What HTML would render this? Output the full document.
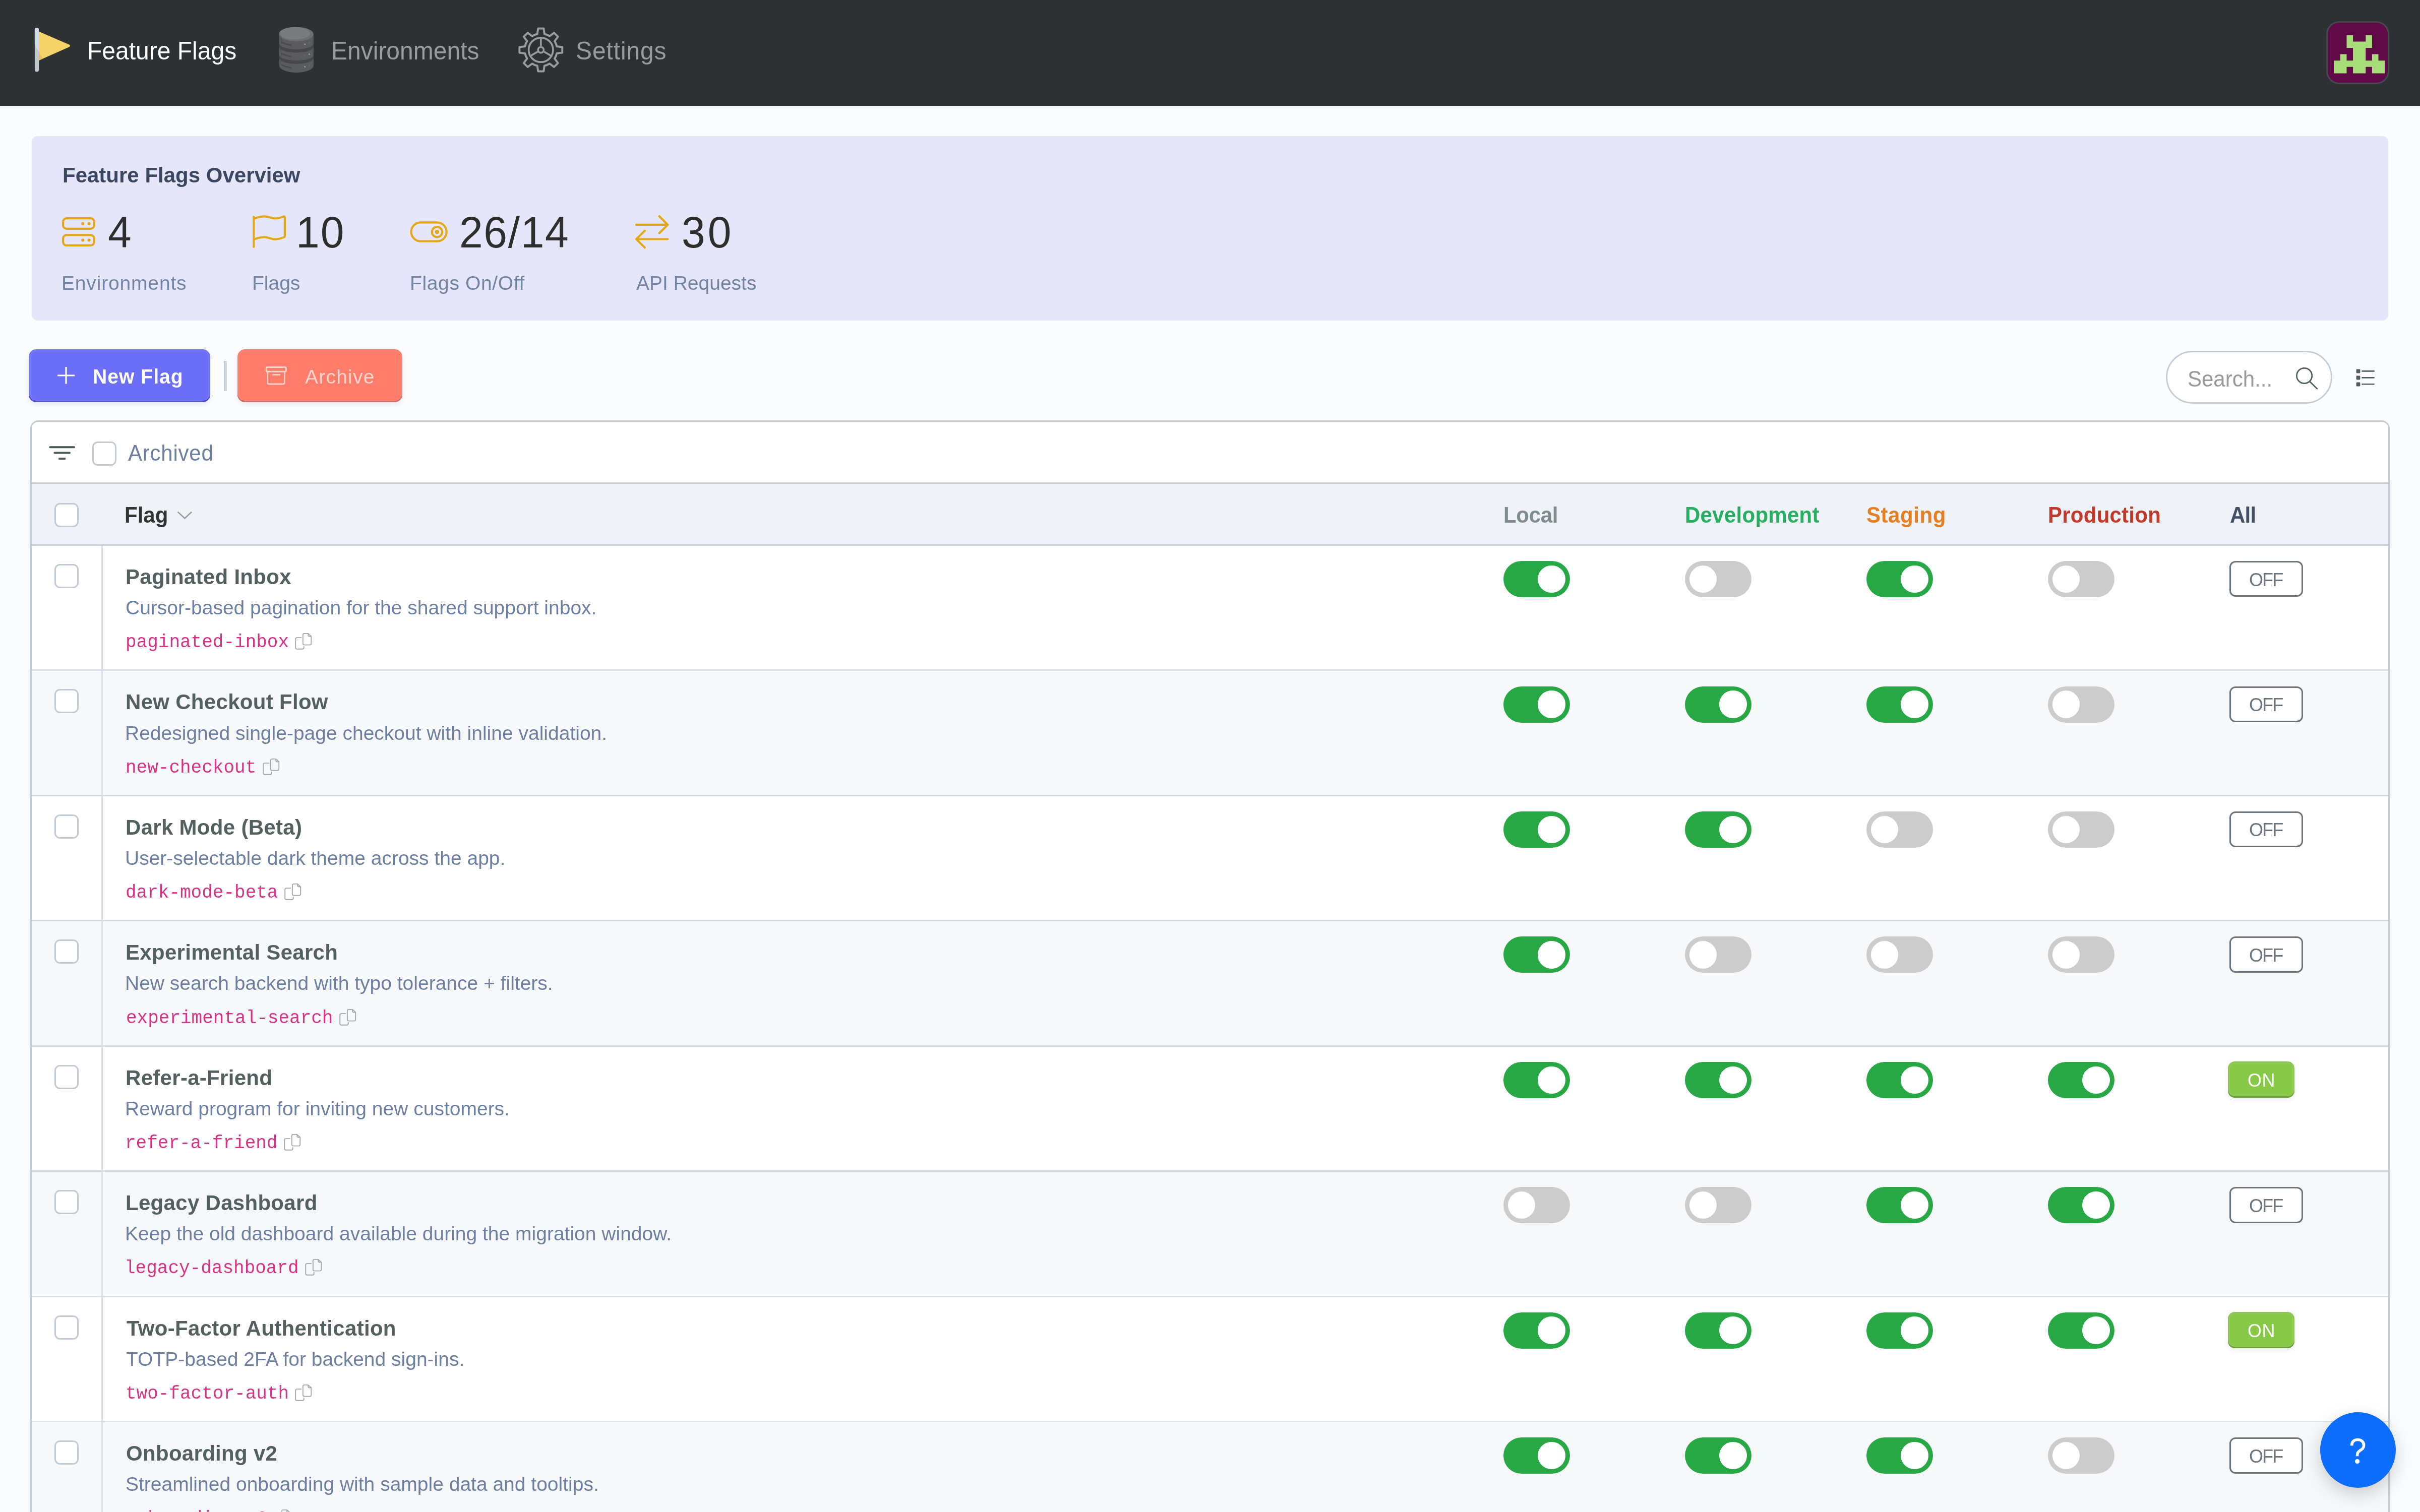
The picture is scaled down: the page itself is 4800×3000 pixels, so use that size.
<!DOCTYPE html>
<html><head><meta charset="utf-8"><title>Feature Flags</title>
<style>
html,body{margin:0;padding:0}
body{width:4800px;height:3000px;overflow:hidden;position:relative;background:#fbfcfd;font-family:'Liberation Sans',sans-serif}
@media (max-width:1800px){html{zoom:0.3333333}}
@media (min-width:1801px) and (max-width:2700px){html{zoom:0.5}}
@media (min-width:2701px) and (max-width:3600px){html{zoom:0.6666667}}
.t{position:absolute;white-space:nowrap;will-change:transform}
.r{position:absolute;box-sizing:border-box}
.s{position:absolute;overflow:visible}
</style></head><body>
<div class="r" style="left:0.00px;top:0.00px;width:4800.00px;height:210.00px;background:#2d3134"></div>
<svg class="s" style="left:60.00px;top:50.00px;" width="90.00" height="100.00" viewBox="60.00 50.00 90.00 100.00"><rect x="68.9" y="55.1" width="8.1" height="87.4" rx="4.05" fill="#c0c7cd"/><path d="M68.9,59.1 Q68.9,55.1 72.95,55.1 Q77,55.1 77,59.1 V102 Q71.5,95 68.9,87.1 Z" fill="#cfdbe5"/><path d="M77,62.5 L136.5,88.2 Q141.5,90.8 136.5,93.4 L77,119.9 Z" fill="#f5d368"/><path d="M77,102 Q80.5,110.5 85.3,116.3 L77,119.9 Z" fill="#e5c060"/></svg>
<div class="t" style="left:173.06px;top:78.47px;font-size:48px;line-height:48px;color:#ffffff;font-family:'Liberation Sans',sans-serif;transform:scaleY(1.054);transform-origin:0 40.63px;">Feature Flags</div>
<svg class="s" style="left:550.00px;top:50.00px;" width="76.00" height="98.00" viewBox="550.00 50.00 76.00 98.00"><path d="M553.9,67.9 V129.8 A34,14.2 0 0 0 621.9,129.8 V67.9 Z" fill="#5a5b5d"/><path d="M553.9,86 A34,11.8 0 0 0 621.9,86 V92.9 A34,11.5 0 0 1 553.9,92.9 Z" fill="#464749"/><path d="M553.9,108.9 A34,11.1 0 0 0 621.9,108.9 V115.1 A34,11.5 0 0 1 553.9,115.1 Z" fill="#464749"/><ellipse cx="587.9" cy="67.9" rx="34" ry="14.2" fill="#6c6d6f"/><ellipse cx="584.5" cy="66.2" rx="30.5" ry="12.4" fill="#7a7b7d"/><g stroke="#4a4b4d" stroke-width="2.8" stroke-linecap="round" fill="none"><path d="M559.2,83.9 Q566,87.5 577.3,89.8"/><path d="M559.2,106.5 Q566,110 577.3,112.1"/><path d="M559.2,129.1 Q566,132.6 577.3,134.7"/></g><g fill="#9a9b9d"><circle cx="604.7" cy="87.7" r="1.5"/><circle cx="613.4" cy="107.5" r="1.5"/><circle cx="604.7" cy="132.5" r="1.5"/></g><g fill="#68696b"><circle cx="613.4" cy="84.9" r="1.5"/><circle cx="604.7" cy="109.9" r="1.5"/><circle cx="613.4" cy="129.7" r="1.5"/></g></svg>
<div class="t" style="left:657.16px;top:78.47px;font-size:48px;line-height:48px;color:#9a9b9d;font-family:'Liberation Sans',sans-serif;transform:scaleY(1.054);transform-origin:0 40.63px;">Environments</div>
<svg class="s" style="left:1020.00px;top:48.00px;" width="106.00" height="104.00" viewBox="1020.00 48.00 106.00 104.00"><g fill="none" stroke="#9a9b9d" stroke-linejoin="round"><path d="M1065.75,67.48 L1067.29,56.56 L1078.31,56.56 L1079.85,67.48 A32.3,32.3 0 0 1 1090.11,71.73 L1098.91,65.09 L1106.71,72.89 L1100.07,81.69 A32.3,32.3 0 0 1 1104.32,91.95 L1115.24,93.49 L1115.24,104.51 L1104.32,106.05 A32.3,32.3 0 0 1 1100.07,116.31 L1106.71,125.11 L1098.91,132.91 L1090.11,126.27 A32.3,32.3 0 0 1 1079.85,130.52 L1078.31,141.44 L1067.29,141.44 L1065.75,130.52 A32.3,32.3 0 0 1 1055.49,126.27 L1046.69,132.91 L1038.89,125.11 L1045.53,116.31 A32.3,32.3 0 0 1 1041.28,106.05 L1030.36,104.51 L1030.36,93.49 L1041.28,91.95 A32.3,32.3 0 0 1 1045.53,81.69 L1038.89,72.89 L1046.69,65.09 L1055.49,71.73 A32.3,32.3 0 0 1 1065.75,67.48 Z" stroke-width="4"/><circle cx="1072.8" cy="99.0" r="24.2" stroke-width="3.7"/><circle cx="1072.8" cy="99.0" r="5.6" stroke-width="3.7"/><g stroke-width="3.7"><line x1="1072.80" y1="91.60" x2="1072.80" y2="76.50"/><line x1="1079.21" y1="102.70" x2="1092.29" y2="110.25"/><line x1="1066.39" y1="102.70" x2="1053.31" y2="110.25"/></g></g></svg>
<div class="t" style="left:1141.62px;top:78.47px;font-size:48px;line-height:48px;color:#9a9b9d;font-family:'Liberation Sans',sans-serif;letter-spacing:0.88px;transform:scaleY(1.054);transform-origin:0 40.63px;">Settings</div>
<div class="r" style="left:4614.00px;top:42.00px;width:125.00px;height:125.00px;border:3px solid #45494e;border-radius:26px;background:#600a47"></div>
<svg class="s" style="left:4614.00px;top:42.00px;" width="125.00" height="125.00" viewBox="4614.00 42.00 125.00 125.00"><path fill="#a6dd78" d="M4654.50,69.80 h12.60 v12.60 h-12.60 Z M4692.30,69.80 h12.60 v12.60 h-12.60 Z M4654.50,82.40 h12.60 v12.60 h-12.60 Z M4667.10,82.40 h12.60 v12.60 h-12.60 Z M4679.70,82.40 h12.60 v12.60 h-12.60 Z M4692.30,82.40 h12.60 v12.60 h-12.60 Z M4667.10,95.00 h12.60 v12.60 h-12.60 Z M4679.70,95.00 h12.60 v12.60 h-12.60 Z M4641.90,107.60 h12.60 v12.60 h-12.60 Z M4667.10,107.60 h12.60 v12.60 h-12.60 Z M4679.70,107.60 h12.60 v12.60 h-12.60 Z M4704.90,107.60 h12.60 v12.60 h-12.60 Z M4629.30,120.20 h12.60 v12.60 h-12.60 Z M4641.90,120.20 h12.60 v12.60 h-12.60 Z M4654.50,120.20 h12.60 v12.60 h-12.60 Z M4667.10,120.20 h12.60 v12.60 h-12.60 Z M4679.70,120.20 h12.60 v12.60 h-12.60 Z M4692.30,120.20 h12.60 v12.60 h-12.60 Z M4704.90,120.20 h12.60 v12.60 h-12.60 Z M4717.50,120.20 h12.60 v12.60 h-12.60 Z M4629.30,132.80 h12.60 v12.60 h-12.60 Z M4641.90,132.80 h12.60 v12.60 h-12.60 Z M4667.10,132.80 h12.60 v12.60 h-12.60 Z M4679.70,132.80 h12.60 v12.60 h-12.60 Z M4704.90,132.80 h12.60 v12.60 h-12.60 Z M4717.50,132.80 h12.60 v12.60 h-12.60 Z "/></svg>
<div class="r" style="left:63.00px;top:270.00px;width:4674.00px;height:366.00px;background:#e6e6fa;border-radius:12px"></div>
<div class="t" style="left:123.79px;top:327.25px;font-size:42px;line-height:42px;color:#3a4762;font-family:'Liberation Sans',sans-serif;font-weight:700;transform:scaleY(1.020);transform-origin:0 35.55px;">Feature Flags Overview</div>
<svg class="s" style="left:118.00px;top:425.00px;" width="76.00" height="70.00" viewBox="118.00 425.00 76.00 70.00"><g fill="none" stroke="#e4a817" stroke-width="4.2"><rect x="125.06" y="433.2" width="61.64" height="20.7" rx="7"/><rect x="125.06" y="466.3" width="61.64" height="20.65" rx="7"/></g><g fill="#e4a817"><circle cx="164.2" cy="443.8" r="3"/><circle cx="176.6" cy="443.8" r="3"/><circle cx="164.2" cy="476.6" r="3"/><circle cx="176.6" cy="476.6" r="3"/></g></svg>
<div class="t" style="left:214.37px;top:420.29px;font-size:84px;line-height:84px;color:#2e2e2e;font-family:'Liberation Sans',sans-serif;transform:scaleY(1.040);transform-origin:0 71.11px;">4</div>
<div class="t" style="left:122.00px;top:542.19px;font-size:39px;line-height:39px;color:#7284a3;font-family:'Liberation Sans',sans-serif;letter-spacing:0.83px;">Environments</div>
<svg class="s" style="left:495.00px;top:420.00px;" width="80.00" height="80.00" viewBox="495.00 420.00 80.00 80.00"><g fill="none" stroke="#e4a817" stroke-width="4.2" stroke-linecap="round" stroke-linejoin="round"><path d="M503.2,430 V490"/><path d="M503.2,434.2 C511,431 517,429.3 524.4,429.3 C533,429.3 538.5,433.5 546.1,433.5 C553.5,433.5 558.5,431 562,429.6 Q564.9,428.8 564.9,431.5 V468 Q564.9,470 562.5,470.9 C558,472.8 553,474.8 546,474.8 C537,474.8 531.5,470.3 524.4,470.3 C516,470.3 509,472.8 503.2,475.2"/></g></svg>
<div class="t" style="left:587.40px;top:420.29px;font-size:84px;line-height:84px;color:#2e2e2e;font-family:'Liberation Sans',sans-serif;letter-spacing:2px;transform:scaleY(1.040);transform-origin:0 71.11px;">10</div>
<div class="t" style="left:499.50px;top:542.19px;font-size:39px;line-height:39px;color:#7284a3;font-family:'Liberation Sans',sans-serif;">Flags</div>
<svg class="s" style="left:805.00px;top:430.00px;" width="90.00" height="60.00" viewBox="805.00 430.00 90.00 60.00"><g fill="none" stroke="#e4a817" stroke-width="4.2"><rect x="815.6" y="441.4" width="70.1" height="37.3" rx="18.65"/><circle cx="866.9" cy="460.2" r="10.15"/></g><circle cx="866.9" cy="460.2" r="4.1" fill="#e4a817"/></svg>
<div class="t" style="left:911.08px;top:420.29px;font-size:84px;line-height:84px;color:#2e2e2e;font-family:'Liberation Sans',sans-serif;letter-spacing:1.65px;transform:scaleY(1.040);transform-origin:0 71.11px;">26/14</div>
<div class="t" style="left:812.90px;top:542.19px;font-size:39px;line-height:39px;color:#7284a3;font-family:'Liberation Sans',sans-serif;letter-spacing:0.64px;">Flags On/Off</div>
<svg class="s" style="left:1250.00px;top:420.00px;" width="90.00" height="80.00" viewBox="1250.00 420.00 90.00 80.00"><g fill="none" stroke="#e4a817" stroke-width="4.2" stroke-linecap="round" stroke-linejoin="round"><path d="M1262,445.9 H1324.4 M1307.7,429 L1324.4,445.9 L1307.7,462.6"/><path d="M1324.4,474.5 H1262 M1278.9,457.8 L1262,474.5 L1278.9,491.2"/></g></svg>
<div class="t" style="left:1351.50px;top:420.29px;font-size:84px;line-height:84px;color:#2e2e2e;font-family:'Liberation Sans',sans-serif;letter-spacing:5px;transform:scaleY(1.040);transform-origin:0 71.11px;">30</div>
<div class="t" style="left:1261.72px;top:542.19px;font-size:39px;line-height:39px;color:#7284a3;font-family:'Liberation Sans',sans-serif;">API Requests</div>
<div class="r" style="left:57.00px;top:693.00px;width:360.00px;height:105.00px;background:#6b6ef7;border-radius:15px;box-shadow:inset 0 -3px 0 #4d51c9,inset 0 0 0 3px rgba(0,0,40,.05),inset 0 0 0 4px rgba(255,255,255,.10),0 4px 10px rgba(60,60,100,.10)"></div>
<svg class="s" style="left:105.00px;top:720.00px;" width="50.00" height="50.00" viewBox="105.00 720.00 50.00 50.00"><g stroke="#fff" stroke-width="3.2"><path d="M114.1,745 H147.9 M131,727.9 V761.8"/></g></svg>
<div class="t" style="left:183.79px;top:727.99px;font-size:39px;line-height:39px;color:#ffffff;font-family:'Liberation Sans',sans-serif;font-weight:700;letter-spacing:1.07px;transform:scaleY(1.060);transform-origin:0 33.01px;">New Flag</div>
<div class="r" style="left:444.00px;top:716.00px;width:6.00px;height:59.50px;background:linear-gradient(90deg,#c3cdd8 0,#c3cdd8 50%,#d3dbe4 50%,#d3dbe4 100%)"></div>
<div class="r" style="left:471.00px;top:693.00px;width:327.00px;height:105.00px;background:#ff7c6a;border-radius:15px;box-shadow:inset 0 -3px 0 #cf6f6b,inset 0 0 0 3px rgba(40,0,0,.05),inset 0 0 0 4px rgba(255,255,255,.10),0 4px 10px rgba(100,60,60,.10)"></div>
<svg class="s" style="left:520.00px;top:720.00px;" width="55.00" height="50.00" viewBox="520.00 720.00 55.00 50.00"><g fill="none" stroke="#ffd0c8" stroke-width="3" stroke-linejoin="round" stroke-linecap="round"><rect x="528.2" y="728.6" width="39.1" height="8.6" rx="2"/><path d="M530.7,737.2 V758.5 Q530.7,762 534.2,762 H560.9 Q564.4,762 564.4,758.5 V737.2"/><path d="M541,743.6 H554.6"/></g></svg>
<div class="t" style="left:605.42px;top:727.99px;font-size:39px;line-height:39px;color:#ffd6cf;font-family:'Liberation Sans',sans-serif;letter-spacing:1.23px;">Archive</div>
<div class="r" style="left:4296.00px;top:696.00px;width:330.00px;height:105.00px;background:#fff;border:3px solid #c4ced8;border-radius:60px"></div>
<div class="t" style="left:4338.59px;top:731.75px;font-size:42px;line-height:42px;color:#999999;font-family:'Liberation Sans',sans-serif;transform:scaleY(1.066);transform-origin:0 35.55px;">Search...</div>
<svg class="s" style="left:4545.00px;top:720.00px;" width="60.00" height="60.00" viewBox="4545.00 720.00 60.00 60.00"><g fill="none" stroke="#505d5d" stroke-width="2.7" stroke-linecap="round"><circle cx="4570.6" cy="745.5" r="15.2"/><path d="M4582.3,758 L4596,771.4"/></g></svg>
<svg class="s" style="left:4670.00px;top:725.00px;" width="45.00" height="45.00" viewBox="4670.00 725.00 45.00 45.00"><g fill="#505d5d"><rect x="4673.6" y="732.6" width="7.8" height="7.8" rx="1.3"/><rect x="4673.6" y="745.6" width="7.8" height="7.8" rx="1.3"/><rect x="4673.6" y="758.6" width="7.8" height="7.8" rx="1.3"/></g><g stroke="#505d5d" stroke-width="2.6" stroke-linecap="round"><path d="M4685.4,736.4 H4708.7 M4685.4,749.4 H4708.7 M4685.4,762.2 H4708.7"/></g></svg>
<div class="r" style="left:60.00px;top:834.00px;width:4680.00px;height:2366.00px;background:#fff;border:3px solid #c4ced8;border-radius:16px"></div>
<svg class="s" style="left:90.00px;top:880.00px;" width="65.00" height="40.00" viewBox="90.00 880.00 65.00 40.00"><g stroke="#4b5858" stroke-width="4" stroke-linecap="round"><path d="M99.3,887.3 H147.1 M108.4,898.5 H138 M117.8,910 H128.4"/></g></svg>
<div class="r" style="left:183.00px;top:876.00px;width:48.00px;height:48.00px;background:#fff;border:3px solid #c1cbd5;border-radius:11px"></div>
<div class="t" style="left:253.52px;top:878.95px;font-size:42px;line-height:42px;color:#6c7fa0;font-family:'Liberation Sans',sans-serif;letter-spacing:0.77px;transform:scaleY(1.066);transform-origin:0 35.55px;">Archived</div>
<div class="r" style="left:63.00px;top:957.00px;width:4674.00px;height:126.00px;background:#eff2f7;border-top:3px solid #c4ced8;border-bottom:3px solid #c4ced8"></div>
<div class="r" style="left:108.00px;top:997.50px;width:48.00px;height:48.00px;background:#fff;border:3px solid #c1cbd5;border-radius:11px"></div>
<div class="t" style="left:247.19px;top:1001.75px;font-size:42px;line-height:42px;color:#333333;font-family:'Liberation Sans',sans-serif;font-weight:700;transform:scaleY(1.060);transform-origin:0 35.55px;">Flag</div>
<svg class="s" style="left:345.00px;top:1008.00px;" width="42.00" height="28.00" viewBox="345.00 1008.00 42.00 28.00"><path d="M352.6,1015.6 L366.4,1028.4 L380.2,1015.6" fill="none" stroke="#9a9a9a" stroke-width="2.6"/></svg>
<div class="t" style="left:2981.89px;top:1001.75px;font-size:42px;line-height:42px;color:#7f8c8d;font-family:'Liberation Sans',sans-serif;font-weight:700;letter-spacing:-0.3px;transform:scaleY(1.060);transform-origin:0 35.55px;">Local</div>
<div class="t" style="left:3342.09px;top:1001.75px;font-size:42px;line-height:42px;color:#27ae60;font-family:'Liberation Sans',sans-serif;font-weight:700;letter-spacing:0.28px;transform:scaleY(1.060);transform-origin:0 35.55px;">Development</div>
<div class="t" style="left:3702.49px;top:1001.75px;font-size:42px;line-height:42px;color:#e67e22;font-family:'Liberation Sans',sans-serif;font-weight:700;letter-spacing:0.55px;transform:scaleY(1.060);transform-origin:0 35.55px;">Staging</div>
<div class="t" style="left:4061.89px;top:1001.75px;font-size:42px;line-height:42px;color:#c0392b;font-family:'Liberation Sans',sans-serif;font-weight:700;letter-spacing:0.24px;transform:scaleY(1.060);transform-origin:0 35.55px;">Production</div>
<div class="t" style="left:4422.65px;top:1001.75px;font-size:42px;line-height:42px;color:#434f63;font-family:'Liberation Sans',sans-serif;font-weight:700;letter-spacing:-0.72px;transform:scaleY(1.060);transform-origin:0 35.55px;">All</div>
<div class="r" style="left:63.00px;top:1083.00px;width:4674.00px;height:248.00px;background:#ffffff;border-bottom:3px solid #d6dfe8"></div>
<div class="r" style="left:201.00px;top:1083.00px;width:3.00px;height:248.00px;background:#d6dfe8"></div>
<div class="r" style="left:108.00px;top:1119.00px;width:48.00px;height:48.00px;background:#fff;border:3px solid #c1cbd5;border-radius:11px"></div>
<div class="t" style="left:249.09px;top:1124.05px;font-size:42px;line-height:42px;color:#536060;font-family:'Liberation Sans',sans-serif;font-weight:700;letter-spacing:0.3px;transform:scaleY(1.030);transform-origin:0 35.55px;">Paginated Inbox</div>
<div class="t" style="left:249.22px;top:1186.09px;font-size:39px;line-height:39px;color:#6e80a1;font-family:'Liberation Sans',sans-serif;">Cursor-based pagination for the shared support inbox.</div>
<div class="t" style="left:248.75px;top:1257.31px;font-size:36px;line-height:36px;color:#d63384;font-family:'Liberation Mono',monospace;">paginated-inbox</div>
<svg class="s" style="left:583.31px;top:1252.30px;" width="40.00" height="40.00" viewBox="583.31 1252.30 40.00 40.00"><g fill="none" stroke="#a3a9ab" stroke-width="1.9" stroke-linejoin="round" stroke-linecap="round"><path d="M603.96,1257.20 H611.46 L617.56,1262.80 V1277.10 Q617.56,1279.90 614.76,1279.90 H603.96 Q601.16,1279.90 601.16,1277.10 V1260.00 Q601.16,1257.20 603.96,1257.20 Z M611.46,1257.20 V1260.00 Q611.46,1262.80 614.26,1262.80 H617.56"/><path d="M597.66,1265.40 H589.36 Q586.56,1265.40 586.56,1268.20 V1285.20 Q586.56,1288.00 589.36,1288.00 H600.26 Q603.06,1288.00 603.06,1285.20 V1283.20"/></g></svg>
<div class="r" style="left:2981.80px;top:1113.10px;width:132.00px;height:72.00px;background:#28a745;border-radius:36px"></div>
<div class="r" style="left:3050.40px;top:1121.90px;width:54.4px;height:54.4px;border-radius:50%;background:#fff"></div>
<div class="r" style="left:3341.80px;top:1113.10px;width:132.00px;height:72.00px;background:#cccccc;border-radius:36px"></div>
<div class="r" style="left:3350.80px;top:1121.90px;width:54.4px;height:54.4px;border-radius:50%;background:#fff"></div>
<div class="r" style="left:3701.80px;top:1113.10px;width:132.00px;height:72.00px;background:#28a745;border-radius:36px"></div>
<div class="r" style="left:3770.40px;top:1121.90px;width:54.4px;height:54.4px;border-radius:50%;background:#fff"></div>
<div class="r" style="left:4061.80px;top:1113.10px;width:132.00px;height:72.00px;background:#cccccc;border-radius:36px"></div>
<div class="r" style="left:4070.80px;top:1121.90px;width:54.4px;height:54.4px;border-radius:50%;background:#fff"></div>
<div class="r" style="left:4422.10px;top:1113.10px;width:146.30px;height:71.40px;background:#fff;border:3px solid #6c757d;border-radius:12px"></div>
<div class="t" style="left:4461.19px;top:1132.53px;font-size:36px;line-height:36px;color:#6c757d;font-family:'Liberation Sans',sans-serif;letter-spacing:-1.9px;transform:scaleY(1.050);transform-origin:0 30.47px;">OFF</div>
<div class="r" style="left:63.00px;top:1331.00px;width:4674.00px;height:249.00px;background:#f7f8fa;border-bottom:3px solid #d6dfe8"></div>
<div class="r" style="left:201.00px;top:1331.00px;width:3.00px;height:249.00px;background:#d6dfe8"></div>
<div class="r" style="left:108.00px;top:1367.43px;width:48.00px;height:48.00px;background:#fff;border:3px solid #c1cbd5;border-radius:11px"></div>
<div class="t" style="left:249.09px;top:1372.48px;font-size:42px;line-height:42px;color:#536060;font-family:'Liberation Sans',sans-serif;font-weight:700;letter-spacing:0.3px;transform:scaleY(1.030);transform-origin:0 35.55px;">New Checkout Flow</div>
<div class="t" style="left:248.00px;top:1434.52px;font-size:39px;line-height:39px;color:#6e80a1;font-family:'Liberation Sans',sans-serif;">Redesigned single-page checkout with inline validation.</div>
<div class="t" style="left:248.75px;top:1505.74px;font-size:36px;line-height:36px;color:#d63384;font-family:'Liberation Mono',monospace;">new-checkout</div>
<svg class="s" style="left:518.50px;top:1500.73px;" width="40.00" height="40.00" viewBox="518.50 1500.73 40.00 40.00"><g fill="none" stroke="#a3a9ab" stroke-width="1.9" stroke-linejoin="round" stroke-linecap="round"><path d="M539.15,1505.63 H546.65 L552.75,1511.23 V1525.53 Q552.75,1528.33 549.95,1528.33 H539.15 Q536.35,1528.33 536.35,1525.53 V1508.43 Q536.35,1505.63 539.15,1505.63 Z M546.65,1505.63 V1508.43 Q546.65,1511.23 549.45,1511.23 H552.75"/><path d="M532.85,1513.83 H524.55 Q521.75,1513.83 521.75,1516.63 V1533.63 Q521.75,1536.43 524.55,1536.43 H535.45 Q538.25,1536.43 538.25,1533.63 V1531.63"/></g></svg>
<div class="r" style="left:2981.80px;top:1361.53px;width:132.00px;height:72.00px;background:#28a745;border-radius:36px"></div>
<div class="r" style="left:3050.40px;top:1370.33px;width:54.4px;height:54.4px;border-radius:50%;background:#fff"></div>
<div class="r" style="left:3341.80px;top:1361.53px;width:132.00px;height:72.00px;background:#28a745;border-radius:36px"></div>
<div class="r" style="left:3410.40px;top:1370.33px;width:54.4px;height:54.4px;border-radius:50%;background:#fff"></div>
<div class="r" style="left:3701.80px;top:1361.53px;width:132.00px;height:72.00px;background:#28a745;border-radius:36px"></div>
<div class="r" style="left:3770.40px;top:1370.33px;width:54.4px;height:54.4px;border-radius:50%;background:#fff"></div>
<div class="r" style="left:4061.80px;top:1361.53px;width:132.00px;height:72.00px;background:#cccccc;border-radius:36px"></div>
<div class="r" style="left:4070.80px;top:1370.33px;width:54.4px;height:54.4px;border-radius:50%;background:#fff"></div>
<div class="r" style="left:4422.10px;top:1361.53px;width:146.30px;height:71.40px;background:#fff;border:3px solid #6c757d;border-radius:12px"></div>
<div class="t" style="left:4461.19px;top:1380.96px;font-size:36px;line-height:36px;color:#6c757d;font-family:'Liberation Sans',sans-serif;letter-spacing:-1.9px;transform:scaleY(1.050);transform-origin:0 30.47px;">OFF</div>
<div class="r" style="left:63.00px;top:1580.00px;width:4674.00px;height:248.00px;background:#ffffff;border-bottom:3px solid #d6dfe8"></div>
<div class="r" style="left:201.00px;top:1580.00px;width:3.00px;height:248.00px;background:#d6dfe8"></div>
<div class="r" style="left:108.00px;top:1615.86px;width:48.00px;height:48.00px;background:#fff;border:3px solid #c1cbd5;border-radius:11px"></div>
<div class="t" style="left:249.09px;top:1620.91px;font-size:42px;line-height:42px;color:#536060;font-family:'Liberation Sans',sans-serif;font-weight:700;letter-spacing:0.3px;transform:scaleY(1.030);transform-origin:0 35.55px;">Dark Mode (Beta)</div>
<div class="t" style="left:248.19px;top:1682.95px;font-size:39px;line-height:39px;color:#6e80a1;font-family:'Liberation Sans',sans-serif;">User-selectable dark theme across the app.</div>
<div class="t" style="left:249.47px;top:1754.17px;font-size:36px;line-height:36px;color:#d63384;font-family:'Liberation Mono',monospace;">dark-mode-beta</div>
<svg class="s" style="left:562.42px;top:1749.16px;" width="40.00" height="40.00" viewBox="562.42 1749.16 40.00 40.00"><g fill="none" stroke="#a3a9ab" stroke-width="1.9" stroke-linejoin="round" stroke-linecap="round"><path d="M583.07,1754.06 H590.57 L596.67,1759.66 V1773.96 Q596.67,1776.76 593.87,1776.76 H583.07 Q580.27,1776.76 580.27,1773.96 V1756.86 Q580.27,1754.06 583.07,1754.06 Z M590.57,1754.06 V1756.86 Q590.57,1759.66 593.37,1759.66 H596.67"/><path d="M576.77,1762.26 H568.47 Q565.67,1762.26 565.67,1765.06 V1782.06 Q565.67,1784.86 568.47,1784.86 H579.37 Q582.17,1784.86 582.17,1782.06 V1780.06"/></g></svg>
<div class="r" style="left:2981.80px;top:1609.96px;width:132.00px;height:72.00px;background:#28a745;border-radius:36px"></div>
<div class="r" style="left:3050.40px;top:1618.76px;width:54.4px;height:54.4px;border-radius:50%;background:#fff"></div>
<div class="r" style="left:3341.80px;top:1609.96px;width:132.00px;height:72.00px;background:#28a745;border-radius:36px"></div>
<div class="r" style="left:3410.40px;top:1618.76px;width:54.4px;height:54.4px;border-radius:50%;background:#fff"></div>
<div class="r" style="left:3701.80px;top:1609.96px;width:132.00px;height:72.00px;background:#cccccc;border-radius:36px"></div>
<div class="r" style="left:3710.80px;top:1618.76px;width:54.4px;height:54.4px;border-radius:50%;background:#fff"></div>
<div class="r" style="left:4061.80px;top:1609.96px;width:132.00px;height:72.00px;background:#cccccc;border-radius:36px"></div>
<div class="r" style="left:4070.80px;top:1618.76px;width:54.4px;height:54.4px;border-radius:50%;background:#fff"></div>
<div class="r" style="left:4422.10px;top:1609.96px;width:146.30px;height:71.40px;background:#fff;border:3px solid #6c757d;border-radius:12px"></div>
<div class="t" style="left:4461.19px;top:1629.39px;font-size:36px;line-height:36px;color:#6c757d;font-family:'Liberation Sans',sans-serif;letter-spacing:-1.9px;transform:scaleY(1.050);transform-origin:0 30.47px;">OFF</div>
<div class="r" style="left:63.00px;top:1828.00px;width:4674.00px;height:249.00px;background:#f7f8fa;border-bottom:3px solid #d6dfe8"></div>
<div class="r" style="left:201.00px;top:1828.00px;width:3.00px;height:249.00px;background:#d6dfe8"></div>
<div class="r" style="left:108.00px;top:1864.29px;width:48.00px;height:48.00px;background:#fff;border:3px solid #c1cbd5;border-radius:11px"></div>
<div class="t" style="left:249.09px;top:1869.34px;font-size:42px;line-height:42px;color:#536060;font-family:'Liberation Sans',sans-serif;font-weight:700;letter-spacing:0.3px;transform:scaleY(1.030);transform-origin:0 35.55px;">Experimental Search</div>
<div class="t" style="left:248.00px;top:1931.38px;font-size:39px;line-height:39px;color:#6e80a1;font-family:'Liberation Sans',sans-serif;">New search backend with typo tolerance + filters.</div>
<div class="t" style="left:249.56px;top:2002.60px;font-size:36px;line-height:36px;color:#d63384;font-family:'Liberation Mono',monospace;">experimental-search</div>
<svg class="s" style="left:670.53px;top:1997.59px;" width="40.00" height="40.00" viewBox="670.53 1997.59 40.00 40.00"><g fill="none" stroke="#a3a9ab" stroke-width="1.9" stroke-linejoin="round" stroke-linecap="round"><path d="M691.18,2002.49 H698.68 L704.78,2008.09 V2022.39 Q704.78,2025.19 701.98,2025.19 H691.18 Q688.38,2025.19 688.38,2022.39 V2005.29 Q688.38,2002.49 691.18,2002.49 Z M698.68,2002.49 V2005.29 Q698.68,2008.09 701.48,2008.09 H704.78"/><path d="M684.88,2010.69 H676.58 Q673.78,2010.69 673.78,2013.49 V2030.49 Q673.78,2033.29 676.58,2033.29 H687.48 Q690.28,2033.29 690.28,2030.49 V2028.49"/></g></svg>
<div class="r" style="left:2981.80px;top:1858.39px;width:132.00px;height:72.00px;background:#28a745;border-radius:36px"></div>
<div class="r" style="left:3050.40px;top:1867.19px;width:54.4px;height:54.4px;border-radius:50%;background:#fff"></div>
<div class="r" style="left:3341.80px;top:1858.39px;width:132.00px;height:72.00px;background:#cccccc;border-radius:36px"></div>
<div class="r" style="left:3350.80px;top:1867.19px;width:54.4px;height:54.4px;border-radius:50%;background:#fff"></div>
<div class="r" style="left:3701.80px;top:1858.39px;width:132.00px;height:72.00px;background:#cccccc;border-radius:36px"></div>
<div class="r" style="left:3710.80px;top:1867.19px;width:54.4px;height:54.4px;border-radius:50%;background:#fff"></div>
<div class="r" style="left:4061.80px;top:1858.39px;width:132.00px;height:72.00px;background:#cccccc;border-radius:36px"></div>
<div class="r" style="left:4070.80px;top:1867.19px;width:54.4px;height:54.4px;border-radius:50%;background:#fff"></div>
<div class="r" style="left:4422.10px;top:1858.39px;width:146.30px;height:71.40px;background:#fff;border:3px solid #6c757d;border-radius:12px"></div>
<div class="t" style="left:4461.19px;top:1877.82px;font-size:36px;line-height:36px;color:#6c757d;font-family:'Liberation Sans',sans-serif;letter-spacing:-1.9px;transform:scaleY(1.050);transform-origin:0 30.47px;">OFF</div>
<div class="r" style="left:63.00px;top:2077.00px;width:4674.00px;height:248.00px;background:#ffffff;border-bottom:3px solid #d6dfe8"></div>
<div class="r" style="left:201.00px;top:2077.00px;width:3.00px;height:248.00px;background:#d6dfe8"></div>
<div class="r" style="left:108.00px;top:2112.72px;width:48.00px;height:48.00px;background:#fff;border:3px solid #c1cbd5;border-radius:11px"></div>
<div class="t" style="left:249.09px;top:2117.77px;font-size:42px;line-height:42px;color:#536060;font-family:'Liberation Sans',sans-serif;font-weight:700;letter-spacing:0.3px;transform:scaleY(1.030);transform-origin:0 35.55px;">Refer-a-Friend</div>
<div class="t" style="left:248.00px;top:2179.81px;font-size:39px;line-height:39px;color:#6e80a1;font-family:'Liberation Sans',sans-serif;">Reward program for inviting new customers.</div>
<div class="t" style="left:247.65px;top:2251.03px;font-size:36px;line-height:36px;color:#d63384;font-family:'Liberation Mono',monospace;">refer-a-friend</div>
<svg class="s" style="left:560.60px;top:2246.02px;" width="40.00" height="40.00" viewBox="560.60 2246.02 40.00 40.00"><g fill="none" stroke="#a3a9ab" stroke-width="1.9" stroke-linejoin="round" stroke-linecap="round"><path d="M581.25,2250.92 H588.75 L594.85,2256.52 V2270.82 Q594.85,2273.62 592.05,2273.62 H581.25 Q578.45,2273.62 578.45,2270.82 V2253.72 Q578.45,2250.92 581.25,2250.92 Z M588.75,2250.92 V2253.72 Q588.75,2256.52 591.55,2256.52 H594.85"/><path d="M574.95,2259.12 H566.65 Q563.85,2259.12 563.85,2261.92 V2278.92 Q563.85,2281.72 566.65,2281.72 H577.55 Q580.35,2281.72 580.35,2278.92 V2276.92"/></g></svg>
<div class="r" style="left:2981.80px;top:2106.82px;width:132.00px;height:72.00px;background:#28a745;border-radius:36px"></div>
<div class="r" style="left:3050.40px;top:2115.62px;width:54.4px;height:54.4px;border-radius:50%;background:#fff"></div>
<div class="r" style="left:3341.80px;top:2106.82px;width:132.00px;height:72.00px;background:#28a745;border-radius:36px"></div>
<div class="r" style="left:3410.40px;top:2115.62px;width:54.4px;height:54.4px;border-radius:50%;background:#fff"></div>
<div class="r" style="left:3701.80px;top:2106.82px;width:132.00px;height:72.00px;background:#28a745;border-radius:36px"></div>
<div class="r" style="left:3770.40px;top:2115.62px;width:54.4px;height:54.4px;border-radius:50%;background:#fff"></div>
<div class="r" style="left:4061.80px;top:2106.82px;width:132.00px;height:72.00px;background:#28a745;border-radius:36px"></div>
<div class="r" style="left:4130.40px;top:2115.62px;width:54.4px;height:54.4px;border-radius:50%;background:#fff"></div>
<div class="r" style="left:4419.00px;top:2105.92px;width:132.20px;height:71.90px;background:#87c846;border-radius:14px;box-shadow:inset 0 -3px 0 #6fa23e,inset 0 0 0 3px rgba(0,40,0,.04),inset 0 0 0 4px rgba(255,255,255,.10),0 4px 10px rgba(0,0,0,.07)"></div>
<div class="t" style="left:4458.39px;top:2126.25px;font-size:36px;line-height:36px;color:#ffffff;font-family:'Liberation Sans',sans-serif;letter-spacing:0.5px;transform:scaleY(1.050);transform-origin:0 30.47px;">ON</div>
<div class="r" style="left:63.00px;top:2325.00px;width:4674.00px;height:249.00px;background:#f7f8fa;border-bottom:3px solid #d6dfe8"></div>
<div class="r" style="left:201.00px;top:2325.00px;width:3.00px;height:249.00px;background:#d6dfe8"></div>
<div class="r" style="left:108.00px;top:2361.15px;width:48.00px;height:48.00px;background:#fff;border:3px solid #c1cbd5;border-radius:11px"></div>
<div class="t" style="left:249.09px;top:2366.20px;font-size:42px;line-height:42px;color:#536060;font-family:'Liberation Sans',sans-serif;font-weight:700;letter-spacing:0.3px;transform:scaleY(1.030);transform-origin:0 35.55px;">Legacy Dashboard</div>
<div class="t" style="left:248.00px;top:2428.24px;font-size:39px;line-height:39px;color:#6e80a1;font-family:'Liberation Sans',sans-serif;">Keep the old dashboard available during the migration window.</div>
<div class="t" style="left:247.21px;top:2499.46px;font-size:36px;line-height:36px;color:#d63384;font-family:'Liberation Mono',monospace;">legacy-dashboard</div>
<svg class="s" style="left:603.36px;top:2494.45px;" width="40.00" height="40.00" viewBox="603.36 2494.45 40.00 40.00"><g fill="none" stroke="#a3a9ab" stroke-width="1.9" stroke-linejoin="round" stroke-linecap="round"><path d="M624.01,2499.35 H631.51 L637.61,2504.95 V2519.25 Q637.61,2522.05 634.81,2522.05 H624.01 Q621.21,2522.05 621.21,2519.25 V2502.15 Q621.21,2499.35 624.01,2499.35 Z M631.51,2499.35 V2502.15 Q631.51,2504.95 634.31,2504.95 H637.61"/><path d="M617.71,2507.55 H609.41 Q606.61,2507.55 606.61,2510.35 V2527.35 Q606.61,2530.15 609.41,2530.15 H620.31 Q623.11,2530.15 623.11,2527.35 V2525.35"/></g></svg>
<div class="r" style="left:2981.80px;top:2355.25px;width:132.00px;height:72.00px;background:#cccccc;border-radius:36px"></div>
<div class="r" style="left:2990.80px;top:2364.05px;width:54.4px;height:54.4px;border-radius:50%;background:#fff"></div>
<div class="r" style="left:3341.80px;top:2355.25px;width:132.00px;height:72.00px;background:#cccccc;border-radius:36px"></div>
<div class="r" style="left:3350.80px;top:2364.05px;width:54.4px;height:54.4px;border-radius:50%;background:#fff"></div>
<div class="r" style="left:3701.80px;top:2355.25px;width:132.00px;height:72.00px;background:#28a745;border-radius:36px"></div>
<div class="r" style="left:3770.40px;top:2364.05px;width:54.4px;height:54.4px;border-radius:50%;background:#fff"></div>
<div class="r" style="left:4061.80px;top:2355.25px;width:132.00px;height:72.00px;background:#28a745;border-radius:36px"></div>
<div class="r" style="left:4130.40px;top:2364.05px;width:54.4px;height:54.4px;border-radius:50%;background:#fff"></div>
<div class="r" style="left:4422.10px;top:2355.25px;width:146.30px;height:71.40px;background:#fff;border:3px solid #6c757d;border-radius:12px"></div>
<div class="t" style="left:4461.19px;top:2374.68px;font-size:36px;line-height:36px;color:#6c757d;font-family:'Liberation Sans',sans-serif;letter-spacing:-1.9px;transform:scaleY(1.050);transform-origin:0 30.47px;">OFF</div>
<div class="r" style="left:63.00px;top:2574.00px;width:4674.00px;height:248.00px;background:#ffffff;border-bottom:3px solid #d6dfe8"></div>
<div class="r" style="left:201.00px;top:2574.00px;width:3.00px;height:248.00px;background:#d6dfe8"></div>
<div class="r" style="left:108.00px;top:2609.58px;width:48.00px;height:48.00px;background:#fff;border:3px solid #c1cbd5;border-radius:11px"></div>
<div class="t" style="left:251.43px;top:2614.63px;font-size:42px;line-height:42px;color:#536060;font-family:'Liberation Sans',sans-serif;font-weight:700;letter-spacing:0.3px;transform:scaleY(1.030);transform-origin:0 35.55px;">Two-Factor Authentication</div>
<div class="t" style="left:250.32px;top:2676.67px;font-size:39px;line-height:39px;color:#6e80a1;font-family:'Liberation Sans',sans-serif;">TOTP-based 2FA for backend sign-ins.</div>
<div class="t" style="left:248.56px;top:2747.89px;font-size:36px;line-height:36px;color:#d63384;font-family:'Liberation Mono',monospace;">two-factor-auth</div>
<svg class="s" style="left:583.11px;top:2742.88px;" width="40.00" height="40.00" viewBox="583.11 2742.88 40.00 40.00"><g fill="none" stroke="#a3a9ab" stroke-width="1.9" stroke-linejoin="round" stroke-linecap="round"><path d="M603.76,2747.78 H611.26 L617.36,2753.38 V2767.68 Q617.36,2770.48 614.56,2770.48 H603.76 Q600.96,2770.48 600.96,2767.68 V2750.58 Q600.96,2747.78 603.76,2747.78 Z M611.26,2747.78 V2750.58 Q611.26,2753.38 614.06,2753.38 H617.36"/><path d="M597.46,2755.98 H589.16 Q586.36,2755.98 586.36,2758.78 V2775.78 Q586.36,2778.58 589.16,2778.58 H600.06 Q602.86,2778.58 602.86,2775.78 V2773.78"/></g></svg>
<div class="r" style="left:2981.80px;top:2603.68px;width:132.00px;height:72.00px;background:#28a745;border-radius:36px"></div>
<div class="r" style="left:3050.40px;top:2612.48px;width:54.4px;height:54.4px;border-radius:50%;background:#fff"></div>
<div class="r" style="left:3341.80px;top:2603.68px;width:132.00px;height:72.00px;background:#28a745;border-radius:36px"></div>
<div class="r" style="left:3410.40px;top:2612.48px;width:54.4px;height:54.4px;border-radius:50%;background:#fff"></div>
<div class="r" style="left:3701.80px;top:2603.68px;width:132.00px;height:72.00px;background:#28a745;border-radius:36px"></div>
<div class="r" style="left:3770.40px;top:2612.48px;width:54.4px;height:54.4px;border-radius:50%;background:#fff"></div>
<div class="r" style="left:4061.80px;top:2603.68px;width:132.00px;height:72.00px;background:#28a745;border-radius:36px"></div>
<div class="r" style="left:4130.40px;top:2612.48px;width:54.4px;height:54.4px;border-radius:50%;background:#fff"></div>
<div class="r" style="left:4419.00px;top:2602.78px;width:132.20px;height:71.90px;background:#87c846;border-radius:14px;box-shadow:inset 0 -3px 0 #6fa23e,inset 0 0 0 3px rgba(0,40,0,.04),inset 0 0 0 4px rgba(255,255,255,.10),0 4px 10px rgba(0,0,0,.07)"></div>
<div class="t" style="left:4458.39px;top:2623.11px;font-size:36px;line-height:36px;color:#ffffff;font-family:'Liberation Sans',sans-serif;letter-spacing:0.5px;transform:scaleY(1.050);transform-origin:0 30.47px;">ON</div>
<div class="r" style="left:63.00px;top:2822.00px;width:4674.00px;height:248.00px;background:#f7f8fa;border-bottom:3px solid #d6dfe8"></div>
<div class="r" style="left:201.00px;top:2822.00px;width:3.00px;height:248.00px;background:#d6dfe8"></div>
<div class="r" style="left:108.00px;top:2858.01px;width:48.00px;height:48.00px;background:#fff;border:3px solid #c1cbd5;border-radius:11px"></div>
<div class="t" style="left:250.18px;top:2863.06px;font-size:42px;line-height:42px;color:#536060;font-family:'Liberation Sans',sans-serif;font-weight:700;letter-spacing:0.3px;transform:scaleY(1.030);transform-origin:0 35.55px;">Onboarding v2</div>
<div class="t" style="left:249.43px;top:2925.10px;font-size:39px;line-height:39px;color:#6e80a1;font-family:'Liberation Sans',sans-serif;">Streamlined onboarding with sample data and tooltips.</div>
<div class="t" style="left:249.61px;top:2996.32px;font-size:36px;line-height:36px;color:#d63384;font-family:'Liberation Mono',monospace;">onboarding-v2</div>
<svg class="s" style="left:540.96px;top:2991.31px;" width="40.00" height="40.00" viewBox="540.96 2991.31 40.00 40.00"><g fill="none" stroke="#a3a9ab" stroke-width="1.9" stroke-linejoin="round" stroke-linecap="round"><path d="M561.61,2996.21 H569.11 L575.21,3001.81 V3016.11 Q575.21,3018.91 572.41,3018.91 H561.61 Q558.81,3018.91 558.81,3016.11 V2999.01 Q558.81,2996.21 561.61,2996.21 Z M569.11,2996.21 V2999.01 Q569.11,3001.81 571.91,3001.81 H575.21"/><path d="M555.31,3004.41 H547.01 Q544.21,3004.41 544.21,3007.21 V3024.21 Q544.21,3027.01 547.01,3027.01 H557.91 Q560.71,3027.01 560.71,3024.21 V3022.21"/></g></svg>
<div class="r" style="left:2981.80px;top:2852.11px;width:132.00px;height:72.00px;background:#28a745;border-radius:36px"></div>
<div class="r" style="left:3050.40px;top:2860.91px;width:54.4px;height:54.4px;border-radius:50%;background:#fff"></div>
<div class="r" style="left:3341.80px;top:2852.11px;width:132.00px;height:72.00px;background:#28a745;border-radius:36px"></div>
<div class="r" style="left:3410.40px;top:2860.91px;width:54.4px;height:54.4px;border-radius:50%;background:#fff"></div>
<div class="r" style="left:3701.80px;top:2852.11px;width:132.00px;height:72.00px;background:#28a745;border-radius:36px"></div>
<div class="r" style="left:3770.40px;top:2860.91px;width:54.4px;height:54.4px;border-radius:50%;background:#fff"></div>
<div class="r" style="left:4061.80px;top:2852.11px;width:132.00px;height:72.00px;background:#cccccc;border-radius:36px"></div>
<div class="r" style="left:4070.80px;top:2860.91px;width:54.4px;height:54.4px;border-radius:50%;background:#fff"></div>
<div class="r" style="left:4422.10px;top:2852.11px;width:146.30px;height:71.40px;background:#fff;border:3px solid #6c757d;border-radius:12px"></div>
<div class="t" style="left:4461.19px;top:2871.54px;font-size:36px;line-height:36px;color:#6c757d;font-family:'Liberation Sans',sans-serif;letter-spacing:-1.9px;transform:scaleY(1.050);transform-origin:0 30.47px;">OFF</div>
<div class="r" style="left:4602.00px;top:2802.00px;width:150.00px;height:150.00px;background:#0d6efd;border-radius:50%;box-shadow:0 12px 36px rgba(0,0,0,.18)"></div>
<svg class="s" style="left:4650.00px;top:2845.00px;" width="55.00" height="65.00" viewBox="4650.00 2845.00 55.00 65.00"><path d="M4664.6,2868.3 C4664.6,2860.2 4669.6,2856.5 4676.4,2856.5 C4683.6,2856.5 4688.6,2861 4688.6,2867.4 C4688.6,2873.4 4684.6,2875.8 4680.6,2878.4 C4677.4,2880.4 4675.6,2882.6 4675.6,2886.6 V2889.2" fill="none" stroke="#fff" stroke-width="5.6"/><circle cx="4675.6" cy="2899.6" r="4.6" fill="#fff"/></svg>
<script>(function(){var w=window.innerWidth;if(w&&Math.abs(w-4800)>2){document.documentElement.style.zoom=(w/4800).toString();}})();</script>
</body></html>
